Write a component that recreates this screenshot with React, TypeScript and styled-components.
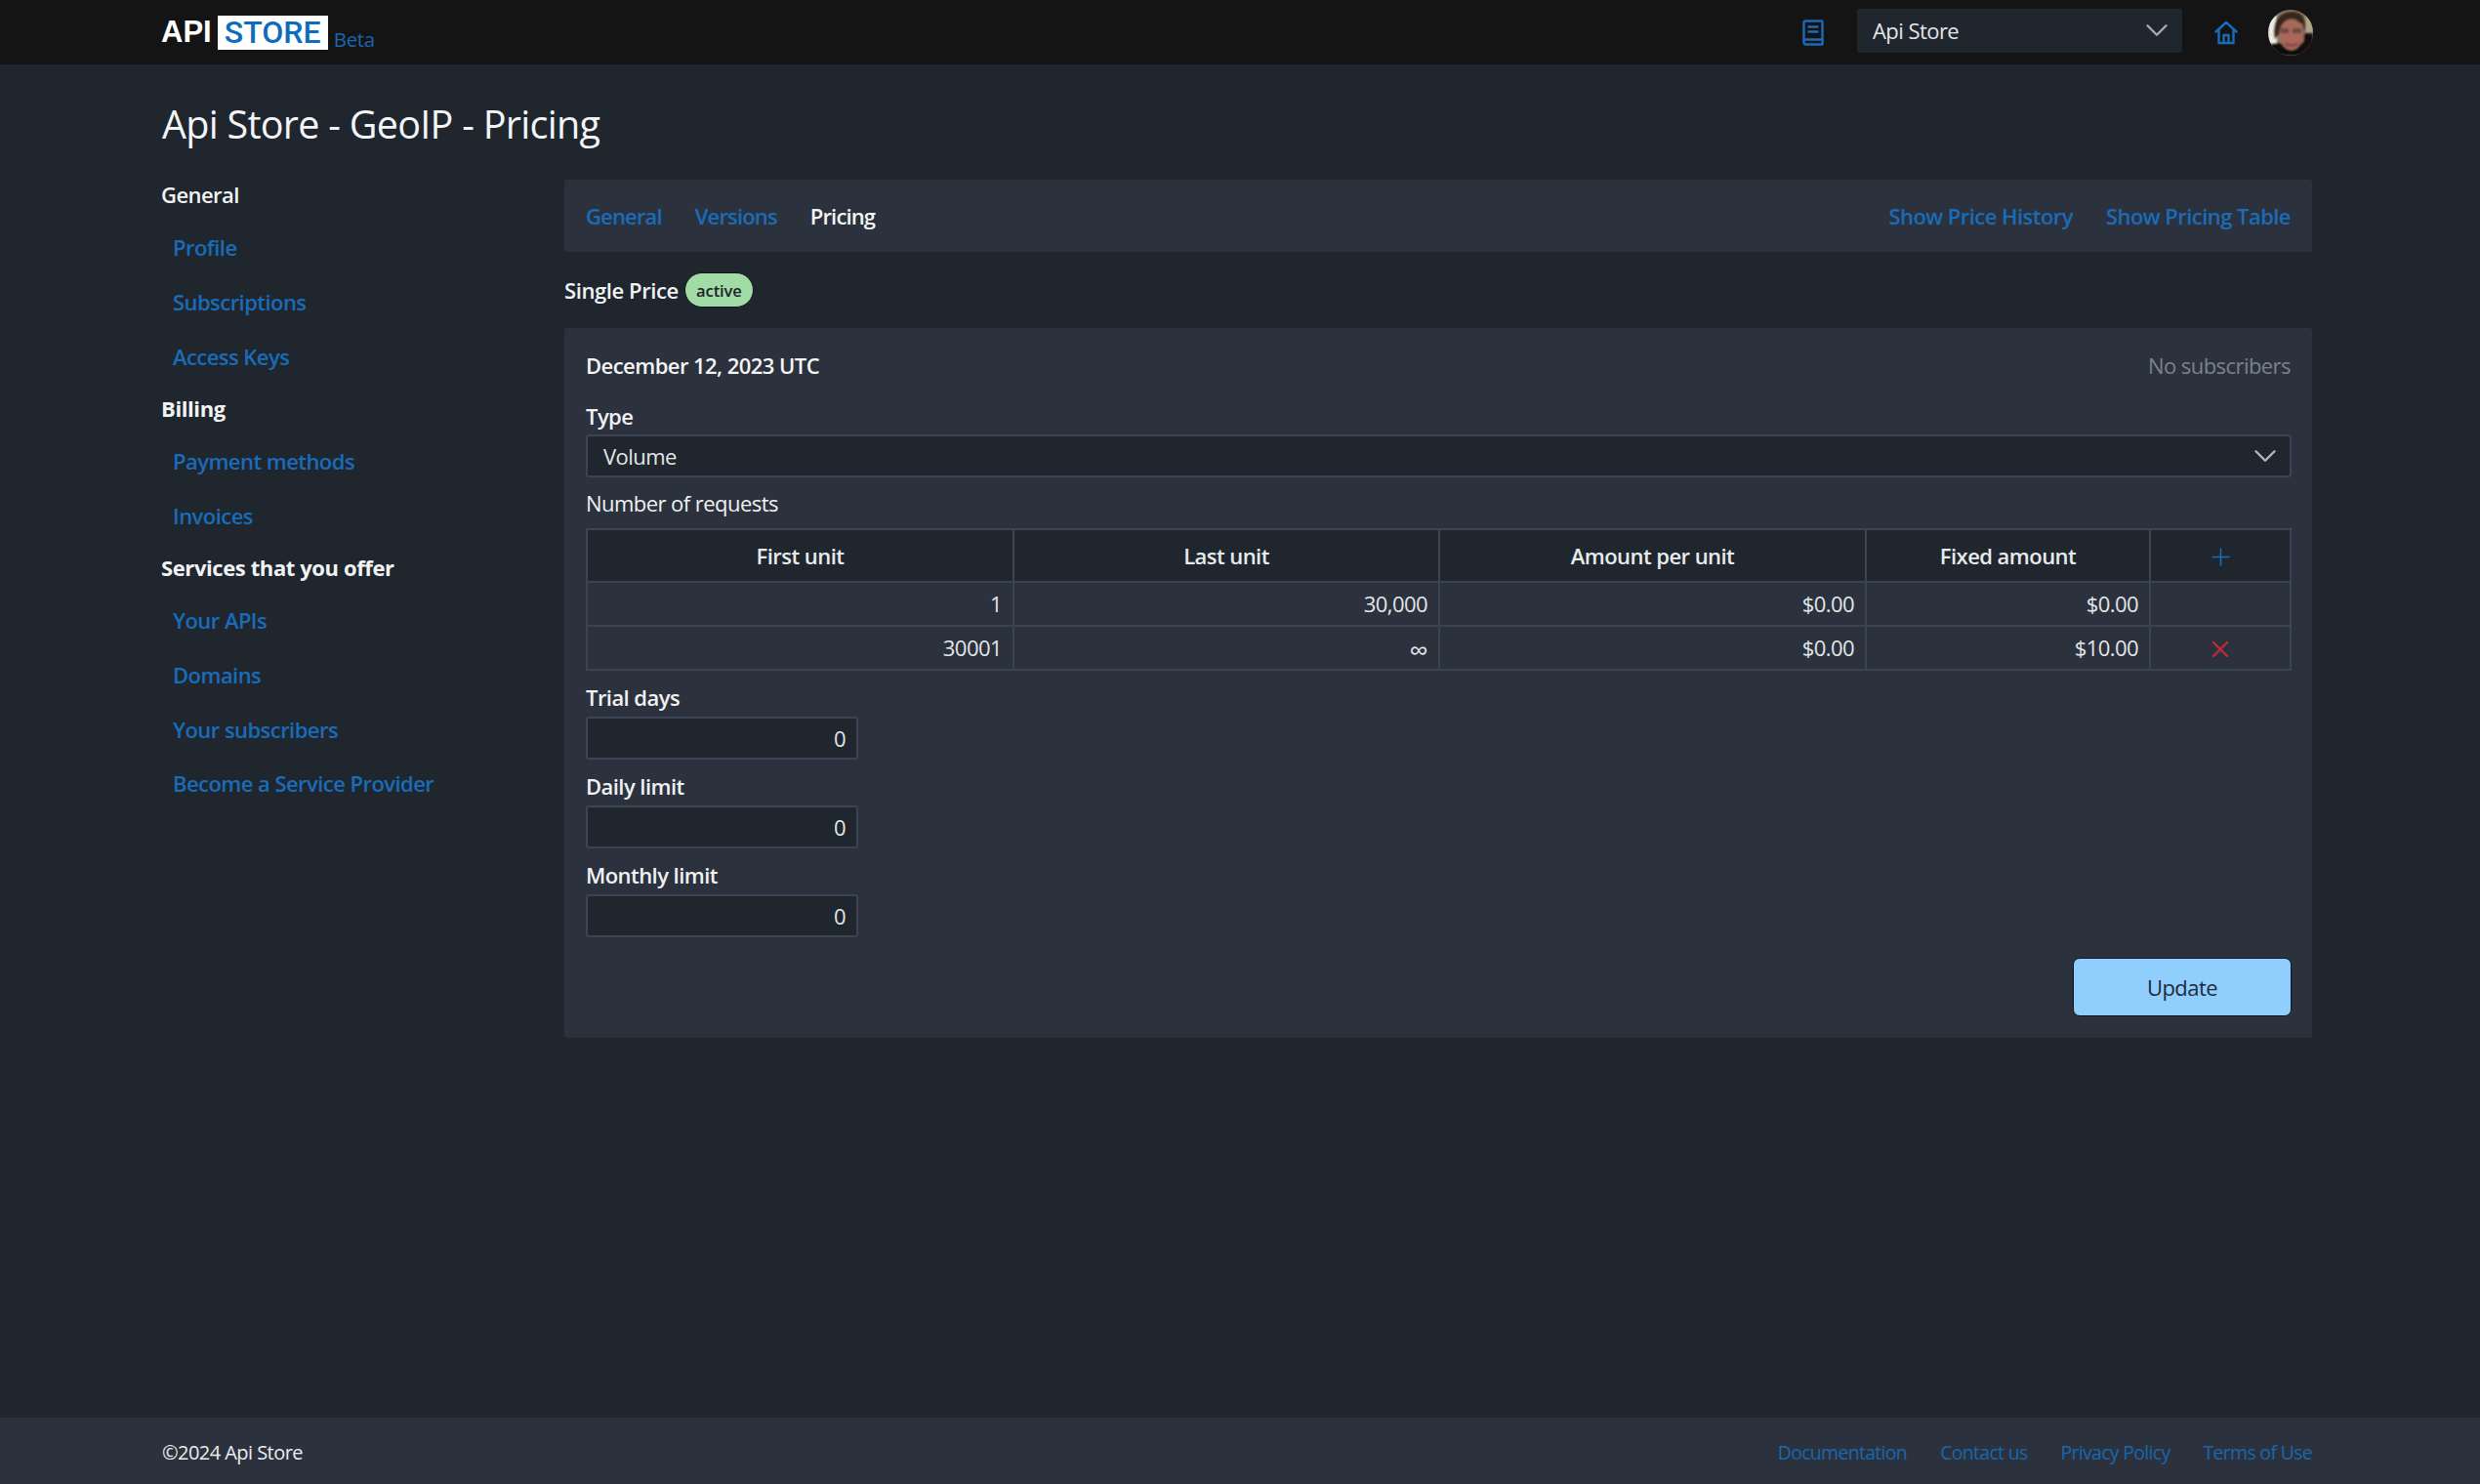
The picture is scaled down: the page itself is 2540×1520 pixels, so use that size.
import React from "react";
import styled, { createGlobalStyle } from "styled-components";
import { ChevronDown, Plus, X } from "lucide-react";

const GlobalStyle = createGlobalStyle`
  html, body {
    margin: 0;
    padding: 0;
    background: #1f262e;
    color: #eceef0;
    font-family: "Open Sans", "Noto Sans", sans-serif;
    font-size: 22px;
    letter-spacing: -0.55px;
  }
  * { box-sizing: border-box; }
`;

const Shell = styled.div`
  display: flex;
  flex-direction: column;
  height: 100vh;
`;

const TopBar = styled.header`
  display: flex;
  align-items: center;
  justify-content: space-between;
  height: 66px;
  padding: 0 171px 0 165px;
  background: #141414;
`;

const Logo = styled.div`
  display: flex;
  align-items: center;
  font-family: "Liberation Sans", Arial, sans-serif;
  font-weight: 700;
  font-size: 31px;
  letter-spacing: 0;
  color: #fff;
`;

const LogoBox = styled.span`
  display: flex;
  align-items: center;
  justify-content: center;
  width: 113px;
  height: 35px;
  margin-left: 6px;
  background: #fff;
  color: #0f6cbd;
  font-family: Roboto, Arial, sans-serif;
  font-weight: 500;
  font-size: 32px;
`;

const Beta = styled.span`
  align-self: flex-end;
  margin: 0 0 -3px 6px;
  font-family: "Open Sans", sans-serif;
  font-weight: 400;
  font-size: 20.5px;
  letter-spacing: -0.3px;
  color: #1a66ad;
`;

const TopActions = styled.div`
  display: flex;
  align-items: center;
`;

const StoreSelect = styled.div`
  display: flex;
  align-items: center;
  justify-content: space-between;
  width: 333px;
  height: 45px;
  margin: 0 33px 4px 34px;
  padding: 0 7px 0 16px;
  border-radius: 3px;
  background: #1f262e;
  color: #e4e6e9;
`;

const Avatar = styled.svg`
  display: block;
  width: 46px;
  height: 47px;
  margin-left: 31px;
`;

const PageTitle = styled.h1`
  margin: 34px 0 30px;
  padding-left: 166px;
  font-size: 39.5px;
  line-height: 54px;
  font-weight: 400;
  letter-spacing: -0.72px;
  color: #f4f5f6;
`;

const Content = styled.main`
  flex: 1;
  display: flex;
  padding: 0 172px 0 165px;
`;

const Sidebar = styled.nav`
  flex: 0 0 413px;
`;

const SideGroup = styled.div`
  margin-bottom: 9.5px;
`;

const SideHeading = styled.div<{ $strong?: boolean }>`
  height: 30px;
  margin-bottom: 12px;
  line-height: 30px;
  font-weight: ${(p) => (p.$strong ? 700 : 600)};
  letter-spacing: ${(p) => (p.$strong ? "-0.4px" : "-0.55px")};
  color: #f2f3f4;
`;

const SideLink = styled.a`
  display: block;
  height: 55.8px;
  padding-left: 12px;
  line-height: 55.8px;
  font-weight: 600;
  color: #1a6bb8;
`;

const Column = styled.section`
  flex: 1;
  min-width: 0;
`;

const TabBar = styled.div`
  display: flex;
  align-items: center;
  justify-content: space-between;
  height: 74px;
  padding: 0 22px;
  border-radius: 3px;
  background: #2b323d;
`;

const TabGroup = styled.div<{ $tight?: boolean }>`
  display: flex;
  gap: 34px;
  letter-spacing: ${(p) => (p.$tight ? "-0.85px" : "-0.55px")};
`;

const Tab = styled.a<{ $active?: boolean }>`
  font-weight: 600;
  color: ${(p) => (p.$active ? "#f4f5f6" : "#1a6bb8")};
`;

const PriceTitle = styled.div`
  display: flex;
  align-items: center;
  gap: 6px;
  height: 78px;
  font-weight: 600;
  letter-spacing: -0.4px;
  color: #f2f3f4;
`;

const Badge = styled.span`
  display: flex;
  align-items: center;
  justify-content: center;
  width: 71px;
  height: 36px;
  border: 1px solid #10151a;
  border-radius: 18px;
  background: #a1dba5;
  color: #1b2229;
  font-size: 16.5px;
  font-weight: 600;
  letter-spacing: -0.1px;
`;

const Card = styled.div`
  padding: 22px 21px 22px 22px;
  border-radius: 3px;
  background: #2b323d;
`;

const CardHead = styled.div`
  display: flex;
  align-items: center;
  justify-content: space-between;
  height: 32px;
  padding-right: 1px;
  font-weight: 600;
  color: #f4f5f6;
`;

const Muted = styled.span`
  font-weight: 400;
  color: #7b828b;
`;

const Label = styled.label<{ $top?: number; $bottom?: number; $plain?: boolean }>`
  display: block;
  height: 30px;
  margin-top: ${(p) => p.$top ?? 0}px;
  margin-bottom: ${(p) => p.$bottom ?? 5.5}px;
  line-height: 30px;
  font-weight: ${(p) => (p.$plain ? 500 : 600)};
  color: #f0f1f3;
`;

const SelectBox = styled.div`
  display: flex;
  align-items: center;
  justify-content: space-between;
  height: 44px;
  padding: 0 6px 0 16px;
  border: 2px solid #3a4453;
  border-radius: 3px;
  background: #1f262e;
  color: #e4e6e9;
`;

const PriceTable = styled.table`
  width: 100%;
  table-layout: fixed;
  border-collapse: collapse;
  border: 2px solid #3a4453;
`;

const HeadCell = styled.th`
  height: 53.5px;
  padding: 0;
  border: 2px solid #3a4453;
  background: #1f262e;
  font-weight: 600;
  text-align: center;
  color: #e8eaec;
`;

const Cell = styled.td`
  height: 45px;
  padding: 0 11px;
  border: 2px solid #3a4453;
  text-align: right;
  color: #e4e6e9;
`;

const IconCell = styled(Cell)`
  padding: 0;
  text-align: center;
`;

const IconWrap = styled.span<{ $color: string }>`
  display: inline-flex;
  vertical-align: middle;
  color: ${(p) => p.$color};
`;

const InfinityMark = styled.span`
  font-size: 27px;
  line-height: 1;
  vertical-align: -4px;
`;

const Fields = styled.div`
  display: flex;
  flex-direction: column;
  gap: 11.5px;
  margin-top: 12px;
`;

const NumberInput = styled.input`
  display: block;
  width: 279px;
  height: 44px;
  padding: 0 11px;
  border: 2px solid #3a4453;
  border-radius: 3px;
  background: #1f262e;
  color: #e4e6e9;
  font: inherit;
  letter-spacing: inherit;
  text-align: right;
  outline: none;
`;

const Actions = styled.div`
  display: flex;
  justify-content: flex-end;
  margin-top: 21px;
`;

const UpdateButton = styled.button`
  width: 224px;
  height: 60px;
  border: 1px solid #10151a;
  border-radius: 7px;
  background: #90cefe;
  color: #1f2a3a;
  font: inherit;
  letter-spacing: inherit;
`;

const Footer = styled.footer`
  display: flex;
  align-items: center;
  justify-content: space-between;
  height: 68px;
  padding: 2px 172px 0 166px;
  background: #2b323d;
  font-size: 20px;
  color: #eceef0;
`;

const FooterLinks = styled.div`
  display: flex;
  gap: 34px;
  font-size: 19.5px;
  letter-spacing: -0.7px;
`;

const FooterLink = styled.a`
  color: #1a66ad;
`;

const BookIcon = () => (
  <svg width="22" height="27" viewBox="0 0 22 27" fill="none" stroke="#1a6bb8" strokeWidth="2.4" strokeLinecap="round" strokeLinejoin="round">
    <path d="M3 1.5h16.5a1 1 0 0 1 1 1v23H3.5a2 2 0 0 1-2-2V3a1.5 1.5 0 0 1 1.5-1.5z" />
    <path d="M1.5 20.5h19" />
    <path d="M6.5 7.5h9M6.5 12.5h9" />
  </svg>
);

const HomeIcon = () => (
  <svg width="24" height="25" viewBox="0 0 24 25" fill="none" stroke="#1a6bb8" strokeWidth="2.4" strokeLinecap="round" strokeLinejoin="round">
    <path d="M1.5 11.5 12 2l10.5 9.5" />
    <path d="M4.5 9v14h15V9" />
    <path d="M9.5 23v-8h5v8" />
  </svg>
);

const AvatarPhoto = () => (
  <Avatar viewBox="0 0 46 47">
    <defs>
      <clipPath id="avatar-clip">
        <ellipse cx="23" cy="23.5" rx="23" ry="23.5" />
      </clipPath>
      <filter id="avatar-blur">
        <feGaussianBlur stdDeviation="0.9" />
      </filter>
    </defs>
    <g clipPath="url(#avatar-clip)">
      <rect width="46" height="47" fill="#8d7a64" />
      <rect x="0" y="6" width="9" height="30" fill="#eeece6" filter="url(#avatar-blur)" />
      <rect x="38" y="2" width="8" height="24" fill="#b3a48c" filter="url(#avatar-blur)" />
      <g filter="url(#avatar-blur)">
        <path d="M7 30C4 10 13 2 25 2c11 0 15 9 12 22l-2-10-18-1-4 10z" fill="#35281f" />
        <ellipse cx="24" cy="25" rx="12.5" ry="15.5" fill="#a8685a" />
        <path d="M13 19h8v5h-8zM25 19h9v5h-9z" fill="#6b4a42" />
        <path d="M17 33c4 3 10 3 14 0l-1 3c-4 2-9 2-12 0z" fill="#81403f" />
        <path d="M0 47V36c6-1 10-2 13-2 7 10 15 10 21 0l12-2v15z" fill="#110e0c" />
        <path d="M37 24l9 0v24h-11z" fill="#15110f" />
      </g>
    </g>
  </Avatar>
);

const requestRows = [
  { first: "1", last: "30,000", perUnit: "$0.00", fixed: "$0.00", removable: false },
  { first: "30001", last: <InfinityMark>∞</InfinityMark>, perUnit: "$0.00", fixed: "$10.00", removable: true },
];

const App = () => {
  return (
    <Shell>
      <GlobalStyle />
      <TopBar>
        <Logo>
          API
          <LogoBox>STORE</LogoBox>
          <Beta>Beta</Beta>
        </Logo>
        <TopActions>
          <BookIcon />
          <StoreSelect>
            Api Store
            <ChevronDown size={38} color="#a9adb2" strokeWidth={1.5} />
          </StoreSelect>
          <HomeIcon />
          <AvatarPhoto />
        </TopActions>
      </TopBar>

      <PageTitle>Api Store - GeoIP - Pricing</PageTitle>

      <Content>
        <Sidebar>
          <SideGroup>
            <SideHeading>General</SideHeading>
            <SideLink>Profile</SideLink>
            <SideLink>Subscriptions</SideLink>
            <SideLink>Access Keys</SideLink>
          </SideGroup>
          <SideGroup>
            <SideHeading $strong>Billing</SideHeading>
            <SideLink>Payment methods</SideLink>
            <SideLink>Invoices</SideLink>
          </SideGroup>
          <SideGroup>
            <SideHeading $strong>Services that you offer</SideHeading>
            <SideLink>Your APIs</SideLink>
            <SideLink>Domains</SideLink>
            <SideLink>Your subscribers</SideLink>
            <SideLink>Become a Service Provider</SideLink>
          </SideGroup>
        </Sidebar>

        <Column>
          <TabBar>
            <TabGroup $tight>
              <Tab>General</Tab>
              <Tab>Versions</Tab>
              <Tab $active>Pricing</Tab>
            </TabGroup>
            <TabGroup>
              <Tab>Show Price History</Tab>
              <Tab>Show Pricing Table</Tab>
            </TabGroup>
          </TabBar>

          <PriceTitle>
            Single Price
            <Badge>active</Badge>
          </PriceTitle>

          <Card>
            <CardHead>
              December 12, 2023 UTC
              <Muted>No subscribers</Muted>
            </CardHead>

            <Label $top={21} $bottom={4}>Type</Label>
            <SelectBox>
              Volume
              <ChevronDown size={38} color="#b4b8bc" strokeWidth={1.5} />
            </SelectBox>

            <Label $plain $top={11} $bottom={11}>Number of requests</Label>
            <PriceTable>
              <colgroup>
                <col style={{ width: 437 }} />
                <col style={{ width: 436 }} />
                <col style={{ width: 437 }} />
                <col style={{ width: 291 }} />
                <col />
              </colgroup>
              <thead>
                <tr>
                  <HeadCell>First unit</HeadCell>
                  <HeadCell>Last unit</HeadCell>
                  <HeadCell>Amount per unit</HeadCell>
                  <HeadCell>Fixed amount</HeadCell>
                  <HeadCell>
                    <IconWrap $color="#1a6bb8">
                      <Plus size={29} strokeWidth={1.3} />
                    </IconWrap>
                  </HeadCell>
                </tr>
              </thead>
              <tbody>
                {requestRows.map((row) => (
                  <tr key={row.first}>
                    <Cell>{row.first}</Cell>
                    <Cell>{row.last}</Cell>
                    <Cell>{row.perUnit}</Cell>
                    <Cell>{row.fixed}</Cell>
                    <IconCell>
                      {row.removable && (
                        <IconWrap $color="#c5283d">
                          <X size={28} strokeWidth={2} />
                        </IconWrap>
                      )}
                    </IconCell>
                  </tr>
                ))}
              </tbody>
            </PriceTable>

            <Fields>
              <div>
                <Label>Trial days</Label>
                <NumberInput readOnly value="0" />
              </div>
              <div>
                <Label>Daily limit</Label>
                <NumberInput readOnly value="0" />
              </div>
              <div>
                <Label>Monthly limit</Label>
                <NumberInput readOnly value="0" />
              </div>
            </Fields>

            <Actions>
              <UpdateButton>Update</UpdateButton>
            </Actions>
          </Card>
        </Column>
      </Content>

      <Footer>
        <span>©2024 Api Store</span>
        <FooterLinks>
          <FooterLink>Documentation</FooterLink>
          <FooterLink>Contact us</FooterLink>
          <FooterLink>Privacy Policy</FooterLink>
          <FooterLink>Terms of Use</FooterLink>
        </FooterLinks>
      </Footer>
    </Shell>
  );
};

export default App;
